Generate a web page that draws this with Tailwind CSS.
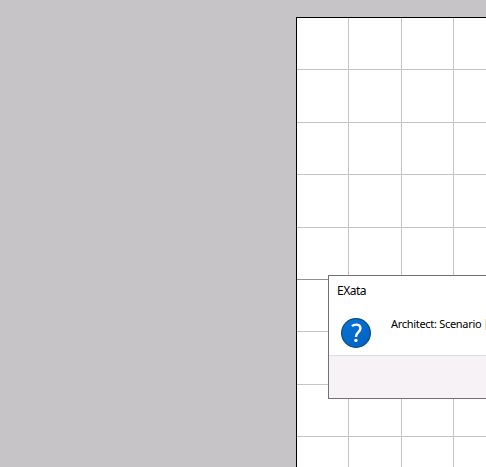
<!DOCTYPE html>
<html lang="en">
<head>
<meta charset="utf-8">
<title>EXata</title>
<script src="https://cdn.jsdelivr.net/npm/@tailwindcss/browser@4"></script>
</head>
<body class="h-[467px] w-[486px] overflow-hidden bg-[#c6c4c6] font-['Noto_Sans',sans-serif] text-black">
<main class="relative h-full w-full overflow-hidden pt-[17px] pl-[296px]">
  <!-- Scenario canvas -->
  <div class="grid h-[450px] w-[190px] grid-cols-[52px_53px_52px_32px] grid-rows-[52px_53px_52px_53px_52px_52px_53px_52px_30px] border-t border-l border-black bg-white *:border-[#c4c4c4]">
    <div class="border-r border-b"></div><div class="border-r border-b"></div><div class="border-r border-b"></div><div class="border-b"></div>
    <div class="border-r border-b"></div><div class="border-r border-b"></div><div class="border-r border-b"></div><div class="border-b"></div>
    <div class="border-r border-b"></div><div class="border-r border-b"></div><div class="border-r border-b"></div><div class="border-b"></div>
    <div class="border-r border-b"></div><div class="border-r border-b"></div><div class="border-r border-b"></div><div class="border-b"></div>
    <div class="border-r border-b border-b-[#929292]!"></div><div class="border-r border-b"></div><div class="border-r border-b"></div><div class="border-b"></div>
    <div class="border-r border-b"></div><div class="border-r border-b"></div><div class="border-r border-b"></div><div class="border-b"></div>
    <div class="border-r border-b"></div><div class="border-r border-b"></div><div class="border-r border-b"></div><div class="border-b"></div>
    <div class="border-r border-b"></div><div class="border-r border-b"></div><div class="border-r border-b"></div><div class="border-b"></div>
    <div class="border-r"></div><div class="border-r"></div><div class="border-r"></div><div></div>
  </div>
  <!-- Message dialog, continuing past the right edge -->
  <section class="absolute top-[275px] left-[328px] flex h-[124px] w-[158px] flex-col border-y border-l border-[#737073] bg-white">
    <h1 class="h-[30px] pl-2 text-[12px] leading-[30px] tracking-[-0.5px]">EXata</h1>
    <div class="flex h-[49px] pl-3">
      <svg class="mt-[12px] size-[31px] shrink-0" viewBox="0 0 31 31" fill="none">
        <defs><linearGradient id="g" x1="0" y1="0" x2="1" y2="1"><stop stop-color="#0874d4"/><stop offset="1" stop-color="#0060c4"/></linearGradient></defs>
        <circle cx="15" cy="15" r="14.4" fill="url(#g)" stroke="#0b4f83" stroke-width="1.2"/>
        <path d="M11 8.2C12.2 7.1 13.6 6.6 15.3 6.6C18 6.6 19.4 8.1 19.4 10.4C19.4 14 14.9 14.4 14.9 19" stroke="#fff" stroke-width="2.4"/>
        <circle cx="14.9" cy="22.4" r="1.7" fill="#fff"/>
      </svg>
      <p class="mt-[10px] ml-[19px] h-[16px] w-[94px] shrink-0 text-[11px] leading-[16px] tracking-[-0.3px] whitespace-nowrap">Architect: Scenario</p>
      <span class="mt-[13px] h-[11px] w-px shrink-0 bg-[#ffd69b]"></span>
    </div>
    <footer class="flex-1 border-t border-[#dfdddf] bg-[#f7f2f6]"></footer>
  </section>
</main>
</body>
</html>
